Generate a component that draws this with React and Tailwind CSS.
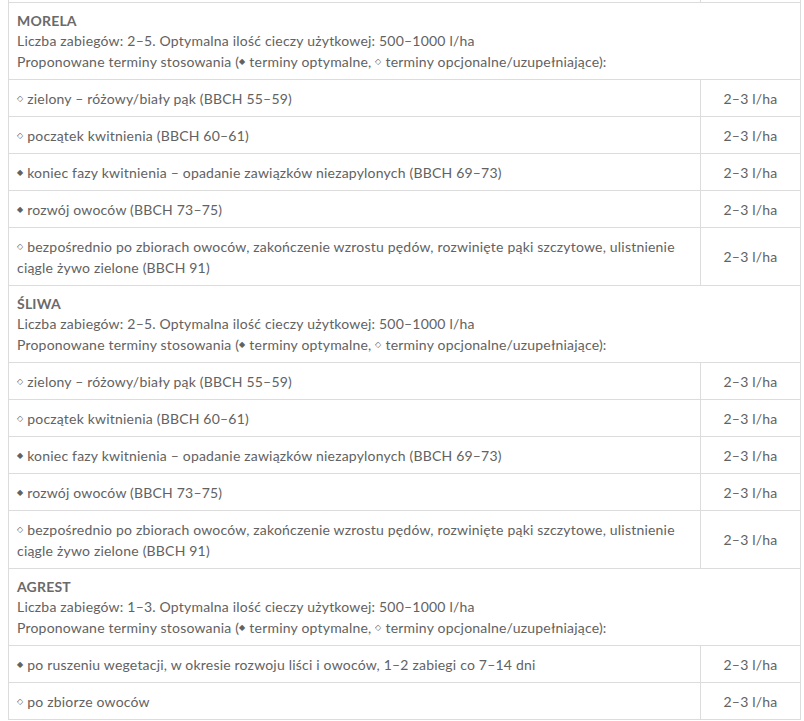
import React from "react";

const mainRows = [
  { mark: "open", text: "zielony – różowy/biały pąk (BBCH 55–59)" },
  { mark: "open", text: "początek kwitnienia (BBCH 60–61)" },
  { mark: "full", text: "koniec fazy kwitnienia – opadanie zawiązków niezapylonych (BBCH 69–73)" },
  { mark: "full", text: "rozwój owoców (BBCH 73–75)" },
  {
    mark: "open",
    text: "bezpośrednio po zbiorach owoców, zakończenie wzrostu pędów, rozwinięte pąki szczytowe, ulistnienie",
    text2: "ciągle żywo zielone (BBCH 91)",
  },
];

const sections = [
  { name: "MORELA", count: "2–5", rows: mainRows },
  { name: "ŚLIWA", count: "2–5", rows: mainRows },
  {
    name: "AGREST",
    count: "1–3",
    rows: [
      { mark: "full", text: "po ruszeniu wegetacji, w okresie rozwoju liści i owoców, 1–2 zabiegi co 7–14 dni" },
      { mark: "open", text: "po zbiorze owoców" },
    ],
  },
];

const Mark = ({ type }) => (
  <span className="inline-block align-middle text-[8px] leading-none relative -top-[2px] mr-[4px]">
    {type === "full" ? "◆" : "◇"}
  </span>
);

const cell = "border border-[#dcdcdc] pt-2 pb-[7px] px-2 leading-[21px] align-middle";

const App = () => {
  return (
    <div
      className="bg-white min-h-[721px] pl-2 overflow-hidden text-[14px] tracking-[0.2px] text-[#626262]"
      style={{ fontFamily: "Lato, 'Open Sans', sans-serif" }}
    >
      <table className="w-[793px] border-collapse">
        <tbody>
          {/* tail of the previous row */}
          <tr>
            <td className="border border-t-0 border-[#dcdcdc] h-[2px] p-0"></td>
            <td className="border border-t-0 border-[#dcdcdc] h-[2px] p-0 w-[100px]"></td>
          </tr>

          {sections.map((s) => (
            <React.Fragment key={s.name}>
              <tr>
                <td colSpan={2} className="border border-[#dcdcdc] pt-2 pb-[7px] px-2">
                  <div className="font-bold leading-[20px] text-[#6a6a6a]">{s.name}</div>
                  <div className="leading-[20px]">
                    Liczba zabiegów: {s.count}. Optymalna ilość cieczy użytkowej: 500–1000 l/ha
                  </div>
                  <div className="leading-[21px]">
                    Proponowane terminy stosowania (<Mark type="full" />terminy optymalne, <Mark type="open" />terminy opcjonalne/uzupełniające):
                  </div>
                </td>
              </tr>
              {s.rows.map((r, i) => (
                <tr key={i}>
                  <td className={cell}>
                    <Mark type={r.mark} />
                    {r.text}
                    {r.text2 && (
                      <>
                        <br />
                        {r.text2}
                      </>
                    )}
                  </td>
                  <td className={cell + " text-center w-[100px]"}>2–3 l/ha</td>
                </tr>
              ))}
            </React.Fragment>
          ))}
        </tbody>
      </table>
    </div>
  );
};

export default App;
